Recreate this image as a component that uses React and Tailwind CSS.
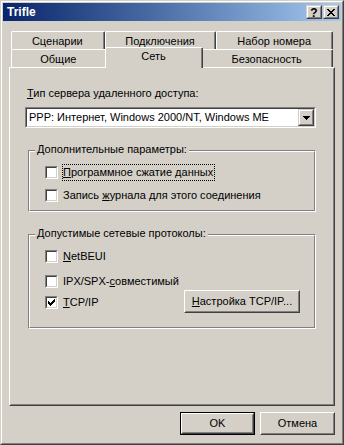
import React from "react";

const CHECK =
  "M6 0h1v1h-1z M5 1h2v1h-2z M0 2h1v1h-1z M4 2h3v1h-3z M0 3h2v1h-2z M3 3h3v1h-3z M0 4h5v1h-5z M1 5h3v1h-3z M2 6h1v1h-1z";
const ARROW = "M0 0h7v1h-7z M1 1h5v1h-5z M2 2h3v1h-3z M3 3h1v1h-1z";
const CLOSE =
  "M0 0h2v1h-2z M6 0h2v1h-2z M1 1h2v1h-2z M5 1h2v1h-2z M2 2h4v1h-4z M3 3h2v1h-2z M2 4h4v1h-4z M1 5h2v1h-2z M5 5h2v1h-2z M0 6h2v1h-2z M6 6h2v1h-2z";

function CaptionBtn({ children }) {
  return (
    <div className="w-[16px] h-[14px] border border-t-[#d4d0c8] border-l-[#d4d0c8] border-r-[#404040] border-b-[#404040] bg-[#d4d0c8]">
      <div className="h-full border border-t-white border-l-white border-r-[#808080] border-b-[#808080] flex items-center justify-center">
        {children}
      </div>
    </div>
  );
}

function Button({ children, className = "", isDefault = false }) {
  const face = (
    <div className="h-full border border-t-white border-l-white border-r-[#404040] border-b-[#404040]">
      <div className="h-full border border-t-[#d4d0c8] border-l-[#d4d0c8] border-r-[#808080] border-b-[#808080] flex items-center justify-center leading-[13px]">
        {children}
      </div>
    </div>
  );
  return (
    <div className={"h-[23px] " + className + (isDefault ? " border border-black" : "")}>
      {face}
    </div>
  );
}

function Tab({ label, className = "", selected = false }) {
  return (
    <div
      className={
        "border-t border-l border-r border-t-white border-l-white border-r-[#404040] rounded-t-[2px] bg-[#d4d0c8] " +
        (selected ? "relative z-10 h-[21px] -mt-[2px] -mx-[2px] " : "h-[18px] ") +
        className
      }
    >
      <div
        className={
          "h-full border-r border-r-[#808080] text-center leading-[13px] whitespace-nowrap " +
          (selected ? "pt-[2px]" : "pt-[3px]")
        }
      >
        {label}
      </div>
    </div>
  );
}

function Check({ checked }) {
  return (
    <div className="w-[13px] h-[13px] shrink-0 border border-t-[#808080] border-l-[#808080] border-r-white border-b-white">
      <div className="w-full h-full border border-t-[#404040] border-l-[#404040] border-r-[#d4d0c8] border-b-[#d4d0c8] bg-white flex items-center justify-center">
        {checked && (
          <svg width="7" height="7" viewBox="0 0 7 7" shapeRendering="crispEdges">
            <path d={CHECK} fill="#000" />
          </svg>
        )}
      </div>
    </div>
  );
}

function Label({ children, focused = false }) {
  return (
    <span
      className={
        "ml-[4px] border py-px pr-px leading-[13px] whitespace-nowrap " +
        (focused ? "border-dotted border-black" : "border-transparent")
      }
    >
      {children}
    </span>
  );
}

function Group({ title, className = "", children }) {
  return (
    <div
      className={
        "relative ml-[17px] w-[288px] border border-t-[#808080] border-l-[#808080] border-r-white border-b-white " +
        className
      }
    >
      <div className="h-full border border-t-white border-l-white border-r-[#808080] border-b-[#808080] flex flex-col">
        {children}
      </div>
      <span className="absolute left-[6px] top-[-8px] px-[2px] bg-[#d4d0c8] leading-[13px] whitespace-nowrap">
        {title}
      </span>
    </div>
  );
}

export default function App() {
  return (
    <div className="w-[344px] h-[445px] bg-[#d4d0c8] border border-t-[#d4d0c8] border-l-[#d4d0c8] border-r-[#404040] border-b-[#404040] font-['Liberation_Sans',Arial,sans-serif] text-[11px] text-black">
      <div className="h-full border border-t-white border-l-white border-r-[#808080] border-b-[#808080] p-px flex flex-col">
        {/* title bar */}
        <div className="h-[18px] shrink-0 flex items-center pl-[4px] pr-[2px] bg-linear-to-r from-[#0a246a] to-[#a6caf0]">
          <span className="flex-1 text-white font-bold text-[12px] leading-[13px]">Trifle</span>
          <div className="flex gap-[1px]">
            <CaptionBtn>
              <span className="font-bold text-[12px] leading-[10px] mt-px">?</span>
            </CaptionBtn>
            <CaptionBtn>
              <svg width="8" height="7" viewBox="0 0 8 7" shapeRendering="crispEdges">
                <path d={CLOSE} fill="#000" />
              </svg>
            </CaptionBtn>
          </div>
        </div>

        <div className="flex-1 px-[6px] pt-[10px] flex flex-col">
          {/* tabs */}
          <div className="flex px-[2px]">
            <Tab label="Сценарии" className="w-[94px]" />
            <Tab label="Подключения" className="w-[112px]" />
            <Tab label="Набор номера" className="w-[117px]" />
          </div>
          <div className="flex items-start h-[18px] px-[2px]">
            <Tab label="Общие" className="w-[96px]" />
            <Tab label="Сеть" selected className="w-[99px]" />
            <Tab label="Безопасность" className="w-[132px]" />
          </div>

          {/* panel */}
          <div className="h-[339px] border border-t-white border-l-white border-r-[#404040] border-b-[#404040]">
            <div className="h-full border border-t-[#d4d0c8] border-l-[#d4d0c8] border-r-[#808080] border-b-[#808080] flex flex-col">
              <div className="mt-[18px] ml-[16px] leading-[13px]">
                <u>Т</u>ип сервера удаленного доступа:
              </div>

              <div className="mt-[7px] ml-[14px] w-[291px] h-[21px] border border-t-[#808080] border-l-[#808080] border-r-white border-b-white">
                <div className="h-full border border-t-[#404040] border-l-[#404040] border-r-[#d4d0c8] border-b-[#d4d0c8] bg-white flex items-center">
                  <span className="flex-1 pl-[2px] leading-[13px] whitespace-nowrap">
                    PPP: Интернет, Windows 2000/NT, Windows ME
                  </span>
                  <div className="w-[16px] h-[17px] border border-t-[#d4d0c8] border-l-[#d4d0c8] border-r-[#404040] border-b-[#404040] bg-[#d4d0c8]">
                    <div className="h-full border border-t-white border-l-white border-r-[#808080] border-b-[#808080] flex items-center justify-center">
                      <svg width="7" height="4" viewBox="0 0 7 4" shapeRendering="crispEdges">
                        <path d={ARROW} fill="#000" />
                      </svg>
                    </div>
                  </div>
                </div>
              </div>

              <Group title="Дополнительные параметры:" className="mt-[22px] h-[62px]">
                <div className="mt-[14px] pl-[15px] flex items-center h-[13px]">
                  <Check />
                  <Label focused>
                    <u>П</u>рограммное сжатие данных
                  </Label>
                </div>
                <div className="mt-[10px] pl-[15px] flex items-center h-[13px]">
                  <Check />
                  <Label>
                    Запись <u>ж</u>урнала для этого соединения
                  </Label>
                </div>
              </Group>

              <Group title="Допустимые сетевые протоколы:" className="mt-[22px] h-[95px]">
                <div className="mt-[14px] pl-[15px] flex items-center h-[13px]">
                  <Check />
                  <Label>
                    <u>N</u>etBEUI
                  </Label>
                </div>
                <div className="mt-[12px] pl-[15px] flex items-center h-[13px]">
                  <Check />
                  <Label>
                    IPX/SPX-<u>с</u>овместимый
                  </Label>
                </div>
                <div className="mt-[2px] pl-[15px] pr-[14px] flex items-start h-[23px]">
                  <div className="mt-[6px]">
                    <Check checked />
                  </div>
                  <div className="mt-[4px]">
                    <Label>
                      <u>T</u>CP/IP
                    </Label>
                  </div>
                  <Button className="ml-auto w-[116px]">
                    <span>
                      <u>Н</u>астройка TCP/IP...
                    </span>
                  </Button>
                </div>
              </Group>
            </div>
          </div>

          {/* dialog buttons */}
          <div className="mt-[6px] flex justify-end gap-[5px]">
            <Button isDefault className="w-[75px]">
              OK
            </Button>
            <Button className="w-[75px]">Отмена</Button>
          </div>
        </div>
      </div>
    </div>
  );
}
